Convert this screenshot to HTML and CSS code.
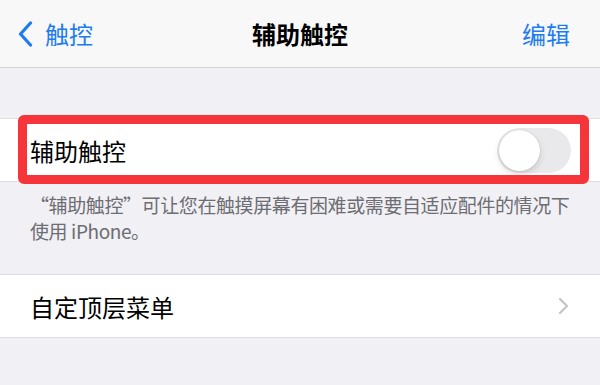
FILE: index.html
```html
<!DOCTYPE html>
<html lang="zh-CN">
<head>
<meta charset="utf-8">
<link rel="stylesheet" href="styles.css">
</head>
<body>
<header class="nav">
  <div class="nav-back">
    <svg class="chev-back" width="15" height="26" viewBox="0 0 15 26"><path d="M12.5 2 L2.5 13 L12.5 24" fill="none" stroke="currentColor" stroke-width="3.2" stroke-linecap="round" stroke-linejoin="round"/></svg>
    <span>触控</span>
  </div>
  <div class="nav-title">辅助触控</div>
  <div class="nav-action">编辑</div>
</header>
<main class="content">
  <section class="group group-first">
    <div class="row">
      <span class="label">辅助触控</span>
      <span class="toggle"><span class="knob"></span></span>
      <div class="highlight"></div>
    </div>
  </section>
  <p class="footnote">“辅助触控”可让您在触摸屏幕有困难或需要自适应配件的情况下使用 iPhone。</p>
  <section class="group">
    <div class="row">
      <span class="label">自定顶层菜单</span>
      <svg class="chev" width="11" height="18" viewBox="0 0 11 18"><path d="M2 2 L9 9 L2 16" fill="none" stroke="currentColor" stroke-width="2.2" stroke-linecap="round" stroke-linejoin="round"/></svg>
    </div>
  </section>
</main>
</body>
</html>
```
FILE: styles.css
```css
html, body {
  margin: 0;
  padding: 0;
}
body {
  background: #f0f0f5;
  font-family: "Noto Sans CJK SC", "Noto Sans", sans-serif;
  width: 600px;
  height: 385px;
  overflow: hidden;
}
.nav {
  height: 67px;
  background: #f8f8f9;
  border-bottom: 1px solid #d2d2d6;
  display: flex;
  align-items: center;
  justify-content: space-between;
  padding: 0 30px 0 18px;
  position: relative;
}
.nav-back {
  display: flex;
  align-items: center;
  gap: 12px;
  color: #1d7cf2;
  font-size: 24px;
}
.chev-back {
  display: block;
}
.nav-title {
  position: absolute;
  left: 0;
  right: 0;
  text-align: center;
  font-size: 24px;
  font-weight: 700;
  color: #000;
  pointer-events: none;
}
.nav-action {
  color: #1d7cf2;
  font-size: 24px;
}
.content {
  padding-top: 50px;
}
.group {
  background: #fff;
  border-top: 1px solid #dedee2;
  border-bottom: 1px solid #dedee2;
}
.row {
  height: 62px;
  display: flex;
  align-items: center;
  justify-content: space-between;
  padding: 0 29px 0 30px;
  position: relative;
}
.label {
  font-size: 24px;
  color: #000;
}
.toggle {
  width: 74px;
  height: 45px;
  border-radius: 23px;
  background: #e9e9eb;
  position: relative;
  display: block;
}
.knob {
  position: absolute;
  left: 2px;
  top: 2px;
  width: 41px;
  height: 41px;
  border-radius: 50%;
  background: #fff;
  box-shadow: 0 3px 6px rgba(0,0,0,0.15), 0 0 1px rgba(0,0,0,0.2);
}
.highlight {
  position: absolute;
  left: 18px;
  right: 11px;
  top: -4px;
  bottom: -3px;
  border: 9px solid #f5353a;
  border-radius: 6px;
}
.footnote {
  margin: 0;
  padding: 10px 20px 0 30px;
  height: 82px;
  font-size: 19px;
  letter-spacing: -0.4px;
  line-height: 26px;
  color: #6d6d72;
}
.chev {
  color: #c4c4c8;
  margin-right: 2px;
}
```
